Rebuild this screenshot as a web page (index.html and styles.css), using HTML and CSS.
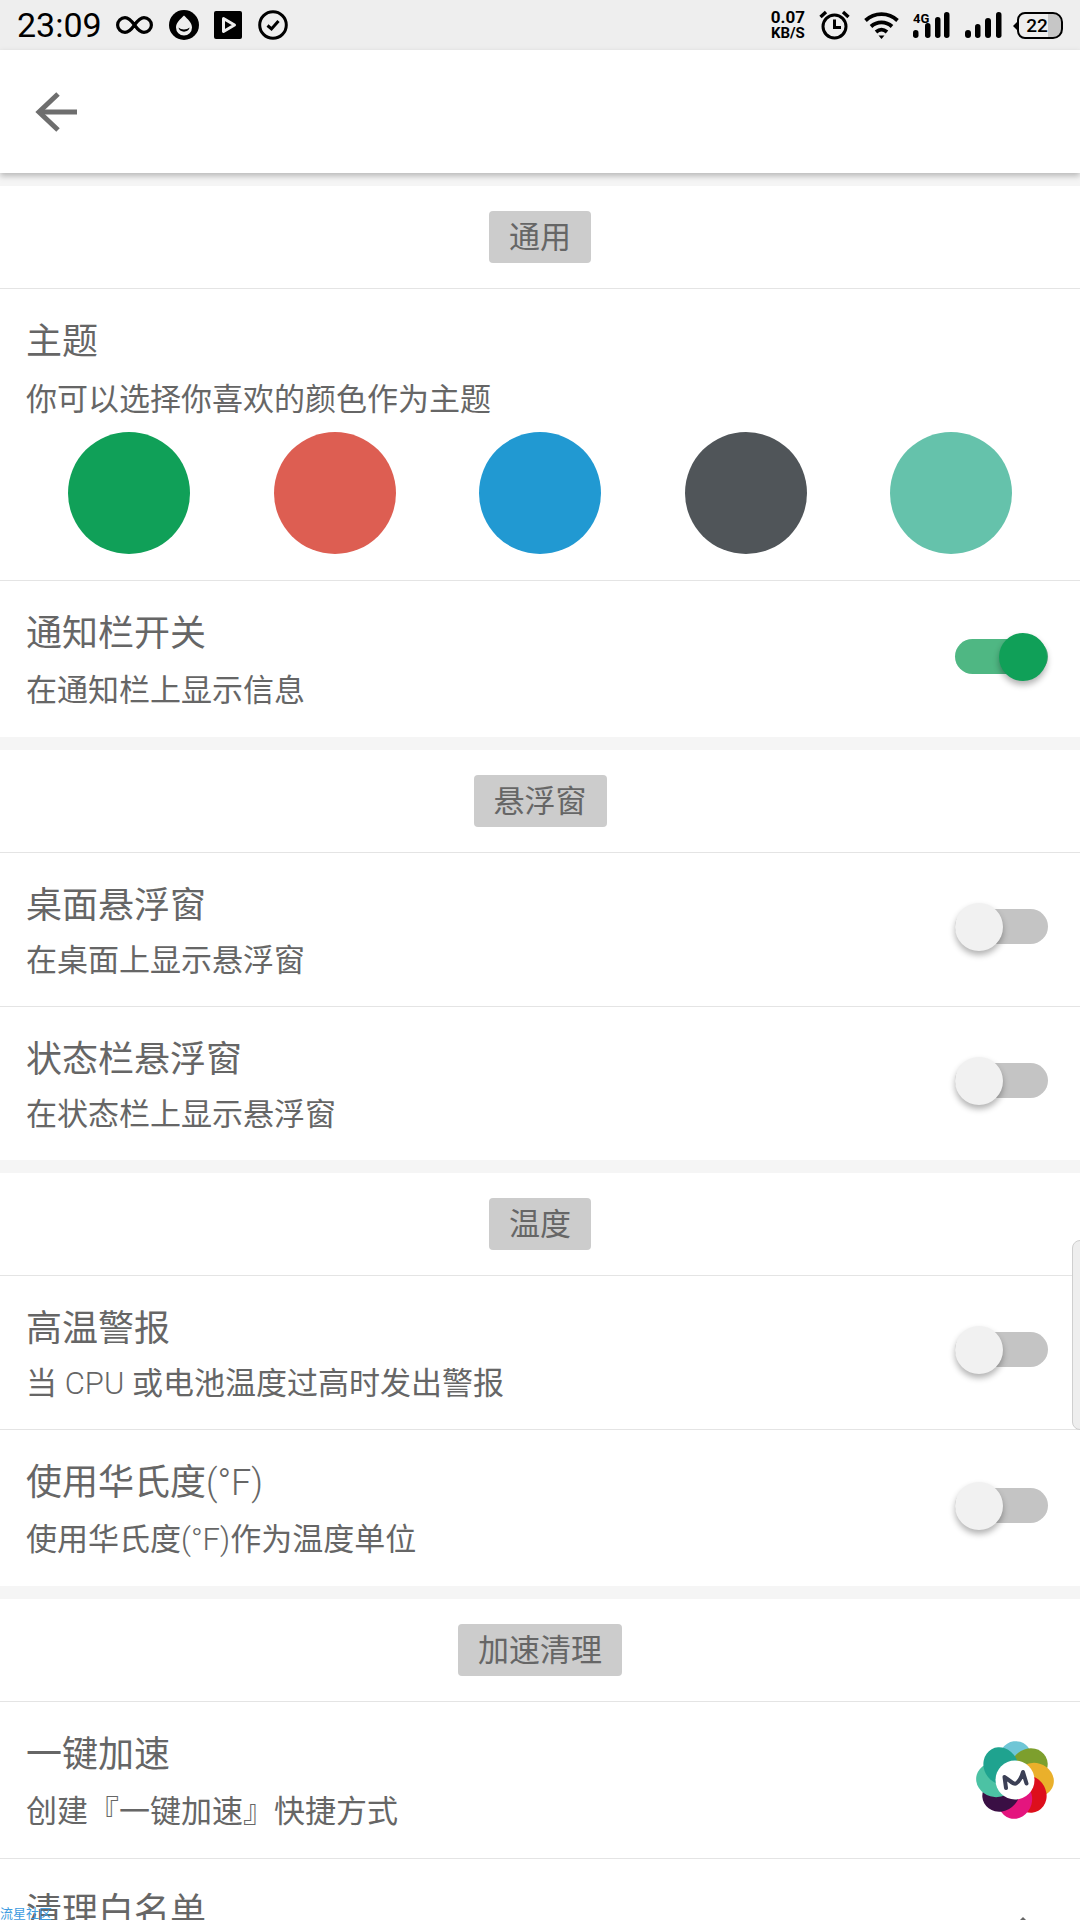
FILE: index.html
```html
<!DOCTYPE html>
<html lang="zh-CN">
  <head>
    <meta charset="UTF-8" />
    <meta name="viewport" content="width=device-width, initial-scale=1.0" />
    <title>设置</title>
    <link rel="stylesheet" href="styles.css">
  </head>
  <body>
    <div class="status-bar">
      <div class="status-left">
        <span class="clock">23:09</span>
        <svg width="37" height="20" viewBox="0 0 37 20" fill="none" stroke="#000" stroke-width="3.2"><path d="M18.500 10C15 5 12.500 2.600 9 2.600A7.400 7.400 0 0 0 9 17.400C12.500 17.400 15 15 18.500 10C22 5 24.500 2.600 28 2.600A7.400 7.400 0 0 1 28 17.400C24.500 17.400 22 15 18.500 10Z"/></svg>
        <svg class="ic-drop" width="30" height="30" viewBox="0 0 30 30"><circle cx="15" cy="15" r="15" fill="#000"/><path d="M15 5.500C11.500 9 7 12.500 7 17.500A8 8 0 0 0 23 17.500C23 12.500 18.500 9 15 5.500Z" fill="#eee"/><path d="M9.500 17.500C12 20 18 20 20.500 17.500C20 23 10 23 9.500 17.500Z" fill="#000"/></svg>
        <svg class="ic-play" width="28" height="28" viewBox="0 0 28 28"><rect width="28" height="28" rx="2" fill="#000"/><path d="M9.500 7.500L20.500 14L9.500 20.500Z" fill="none" stroke="#eee" stroke-width="3" stroke-linejoin="round"/></svg>
        <svg class="ic-check" width="30" height="30" viewBox="0 0 30 30" fill="none" stroke="#000"><circle cx="15" cy="15" r="13.300" stroke-width="3"/><path d="M9.500 15.500L13.500 19L20.500 11" stroke-width="3"/></svg>
      </div>
      <div class="status-right">
        <div class="speed"><span>0.07</span><span>KB/S</span></div>
        <svg width="31" height="30" viewBox="0 0 31 30" fill="none" stroke="#000"><circle cx="15.500" cy="16.500" r="11.500" stroke-width="3"/><path d="M15.500 9.500V17.500H22" stroke-width="3"/><path d="M1.500 7L7 2M29.500 7L24 2" stroke-width="3.400"/></svg>
        <svg width="35" height="30" viewBox="0 0 35 30" fill="none" stroke="#000" stroke-width="3.800"><path d="M1.500 10.500C10.500 2 24.500 2 33.500 10.500"/><path d="M7 16.500C13 11 22 11 28 16.500"/><path d="M12 22C15.500 19 19.500 19 23 22"/><path d="M14.500 25.500L17.500 29L20.500 25.500Z" fill="#000" stroke="none"/></svg>
        <svg width="38" height="30" viewBox="0 0 38 30"><text class="net-label" x="0" y="13">4G</text><rect x="0" y="20" width="5.500" height="8" rx="2.700"/><rect x="12" y="13" width="5.500" height="15" rx="2.700"/><rect x="22" y="7" width="5.500" height="21" rx="2.700"/><rect x="31" y="2" width="5.500" height="26" rx="2.700"/></svg>
        <svg width="37" height="30" viewBox="0 0 37 30"><rect x="0" y="20" width="6" height="8" rx="3"/><rect x="10" y="14" width="5.500" height="14" rx="2.700"/><rect x="20" y="8" width="6" height="20" rx="3"/><rect x="31" y="2" width="5.500" height="26" rx="2.700"/></svg>
        <div class="battery"><span class="battery-tip"></span><span class="battery-level">22</span></div>
      </div>
    </div>

    <div class="toolbar">
      <svg width="42" height="40" viewBox="0 0 42 40" fill="none" stroke="#6e6e6e" stroke-width="5"><path d="M42 20H4"/><path d="M23 2L4 20L23 38"/></svg>
    </div>

    <section class="group first">
      <div class="group-head"><span class="chip">通用</span></div>
      <div class="row theme-row">
        <h2 class="row-title">主题</h2>
        <p class="row-sub">你可以选择你喜欢的颜色作为主题</p>
        <div class="swatches">
          <span class="swatch green"></span>
          <span class="swatch red"></span>
          <span class="swatch blue"></span>
          <span class="swatch slate"></span>
          <span class="swatch teal"></span>
        </div>
      </div>
      <div class="row h157">
        <div class="row-text">
          <h2 class="row-title">通知栏开关</h2>
          <p class="row-sub">在通知栏上显示信息</p>
        </div>
        <span class="switch on"></span>
      </div>
    </section>

    <section class="group">
      <div class="group-head"><span class="chip">悬浮窗</span></div>
      <div class="row h154">
        <div class="row-text">
          <h2 class="row-title">桌面悬浮窗</h2>
          <p class="row-sub">在桌面上显示悬浮窗</p>
        </div>
        <span class="switch"></span>
      </div>
      <div class="row h154">
        <div class="row-text">
          <h2 class="row-title">状态栏悬浮窗</h2>
          <p class="row-sub">在状态栏上显示悬浮窗</p>
        </div>
        <span class="switch"></span>
      </div>
    </section>

    <section class="group">
      <div class="group-head"><span class="chip">温度</span></div>
      <div class="row h154">
        <div class="row-text">
          <h2 class="row-title">高温警报</h2>
          <p class="row-sub">当 <span class="latin">CPU</span> 或电池温度过高时发出警报</p>
        </div>
        <span class="switch"></span>
      </div>
      <div class="row h157">
        <div class="row-text">
          <h2 class="row-title">使用华氏度<span class="latin">(°F)</span></h2>
          <p class="row-sub">使用华氏度<span class="latin">(°F)</span>作为温度单位</p>
        </div>
        <span class="switch"></span>
      </div>
    </section>

    <section class="group">
      <div class="group-head"><span class="chip">加速清理</span></div>
      <div class="row h157">
        <div class="row-text">
          <h2 class="row-title">一键加速</h2>
          <p class="row-sub">创建『一键加速』快捷方式</p>
        </div>
        <svg class="logo" width="78" height="78" viewBox="-39 -39 78 78">
          <g>
            <ellipse cx="0" cy="-20" rx="17" ry="19" fill="#6fc6d6" transform="rotate(0) rotate(16 0 -20)"/>
            <ellipse cx="0" cy="-20" rx="17" ry="19" fill="#7d9f2d" transform="rotate(45) rotate(16 0 -20)"/>
            <ellipse cx="0" cy="-20" rx="17" ry="19" fill="#eab02b" transform="rotate(90) rotate(16 0 -20)"/>
            <ellipse cx="0" cy="-20" rx="17" ry="19" fill="#dd0f1c" transform="rotate(135) rotate(16 0 -20)"/>
            <ellipse cx="0" cy="-20" rx="17" ry="19" fill="#e4157e" transform="rotate(180) rotate(16 0 -20)"/>
            <ellipse cx="0" cy="-20" rx="17" ry="19" fill="#3a0f44" transform="rotate(225) rotate(16 0 -20)"/>
            <ellipse cx="0" cy="-20" rx="17" ry="19" fill="#4cc2a4" transform="rotate(270) rotate(16 0 -20)"/>
            <ellipse cx="0" cy="-20" rx="17" ry="19" fill="#1fa38f" transform="rotate(315) rotate(16 0 -20)"/>
          </g>
          <circle r="19.500" fill="#fff"/>
          <path d="M-9 8L-10.500 -3C-5 0 -2 5 1 3.500C4 2 7 -4 8 -8L11.500 3.500" fill="none" stroke="#3b3f55" stroke-width="4" stroke-linecap="round" stroke-linejoin="round"/>
        </svg>
      </div>
      <div class="row h157">
        <div class="row-text">
          <h2 class="row-title">清理白名单</h2>
        </div>
      </div>
    </section>

    <div class="scroll-handle"></div>
    <svg class="chevron" width="24" height="14" viewBox="0 0 24 14"><path d="M12 0L22 10H2Z" fill="#666"/></svg>
    <span class="watermark">流星社区</span>
  </body>
</html>
```

FILE: styles.css
```css
/* styles.css */
html,
body {
  margin: 0;
  height: 1920px;
  overflow: hidden;
}

body {
  position: relative;
  background: #f5f5f5;
  font-family: Roboto, "Noto Sans CJK SC", sans-serif;
  color: #666;
}

.status-bar {
  height: 50px;
  background: #eeeeee;
  display: flex;
  justify-content: space-between;
  align-items: center;
  padding: 0 17px;
  box-sizing: border-box;
  color: #000;
}

.status-left,
.status-right {
  display: flex;
  align-items: center;
}

.clock {
  font-size: 34px;
  line-height: 50px;
  margin-right: 14px;
}

.ic-drop,
.ic-check {
  margin-left: 16px;
}

.ic-play {
  margin-left: 15px;
}

.speed {
  display: flex;
  flex-direction: column;
  align-items: center;
  font-weight: 700;
  font-size: 15px;
  line-height: 16px;
  margin-right: 14px;
}

.speed span:first-child {
  font-size: 17px;
}

.status-right svg {
  margin-right: 14px;
}

.net-label {
  font-size: 13px;
  font-weight: 700;
}

.battery {
  position: relative;
  width: 42px;
  height: 23px;
  margin-left: 1px;
  border: 2px solid #000;
  border-radius: 8px 10px 10px 8px;
  background: linear-gradient(to right, #eee 69%, #c6c6c6 69%);
  text-align: center;
}

.battery-tip {
  position: absolute;
  left: -6px;
  top: 7px;
  border: 5px solid transparent;
  border-left: 0;
  border-right-color: #000;
}

.battery-level {
  display: inline-block;
  font-size: 19px;
  font-weight: 500;
  line-height: 23px;
  margin-right: 6px;
}

.toolbar {
  height: 123px;
  background: #fff;
  display: flex;
  align-items: center;
  padding-left: 35px;
  box-sizing: border-box;
  box-shadow: 0 3px 6px rgba(0, 0, 0, 0.25);
  position: relative;
}

.group {
  background: #fff;
  margin-bottom: 13px;
}

.group.first {
  margin-top: 13px;
}

.group-head {
  height: 102px;
  display: flex;
  align-items: center;
  justify-content: center;
}

.chip {
  background: #cccccc;
  border-radius: 4px;
  padding: 1px 20px 0;
  height: 51px;
  font-size: 31px;
  line-height: 52px;
}

.row {
  border-top: 1px solid #e4e4e4;
  box-sizing: border-box;
  padding: 0 32px 0 26px;
  display: flex;
  align-items: center;
  justify-content: space-between;
}

.h154 {
  height: 154px;
}

.h154 .switch {
  margin-bottom: 7px;
}

.h157 {
  height: 157px;
}

.row-text {
  align-self: flex-start;
  padding-top: 29px;
}

.h154 .row-sub {
  margin-top: 9px;
}

.h157 .row-sub {
  margin-top: 11px;
}

.theme-row {
  height: 292px;
  display: block;
  padding: 29px 0 0;
}

.theme-row .row-title,
.theme-row .row-sub {
  padding-left: 26px;
}

.row-title {
  margin: 0;
  font-size: 36px;
  font-weight: 400;
  line-height: 48px;
}

.row-sub {
  margin: 12px 0 0;
  font-size: 31px;
  font-weight: 400;
  line-height: 44px;
}

.latin {
  font-weight: 300;
}

.swatches {
  display: flex;
  justify-content: space-between;
  padding: 0 68px;
  margin-top: 10px;
}

.swatch {
  width: 122px;
  height: 122px;
  border-radius: 50%;
}

.green { background: #10a058; }
.red { background: #dd5e52; }
.blue { background: #2199d2; }
.slate { background: #505559; }
.teal { background: #65c2ab; }

.switch {
  position: relative;
  width: 93px;
  height: 35px;
  margin-bottom: 5px;
  border-radius: 18px;
  background: #c4c4c4;
}

.switch::after {
  content: "";
  position: absolute;
  left: 0;
  top: -6px;
  width: 48px;
  height: 48px;
  border-radius: 50%;
  background: #f1f1f1;
  box-shadow: 0 4px 6px rgba(0, 0, 0, 0.3);
}

.switch.on {
  background: #4fb783;
}

.switch.on::after {
  left: 44px;
  background: #10a058;
}

.logo {
  margin-right: -6px;
}

.scroll-handle {
  position: absolute;
  right: -8px;
  top: 1240px;
  width: 14px;
  height: 188px;
  background: #eeeeee;
  border: 1px solid #cfcfcf;
  border-radius: 8px;
}

.chevron {
  position: absolute;
  left: 1011px;
  top: 1917px;
}

.watermark {
  position: absolute;
  left: 0;
  top: 1906px;
  font-size: 13px;
  line-height: 16px;
  color: #3d9be0;
}
```
